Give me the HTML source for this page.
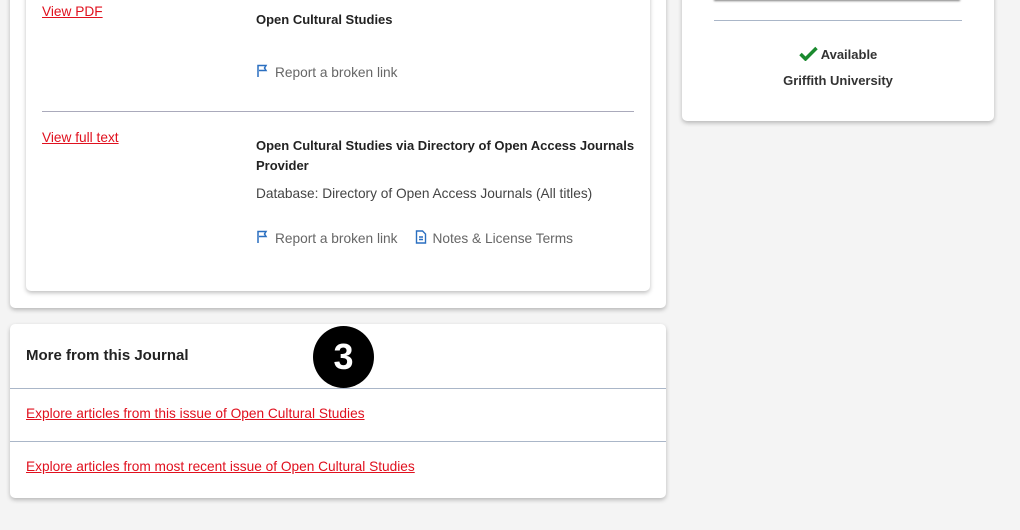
<!DOCTYPE html>
<html><head><meta charset="utf-8"><style>
body{margin:0;width:1020px;height:530px;background:#f4f4f4;font-family:"Liberation Sans",sans-serif;position:relative;overflow:hidden;color:#333}
.abs{position:absolute}
.card{background:#fff;border-radius:5px;box-shadow:0 2px 4px rgba(0,0,0,.25)}
a{color:#e0101e;text-decoration:underline;font-size:13.7px}
.b{font-weight:bold;font-size:13px;color:#222}
.g{font-size:13.7px;color:#666}
.t{font-size:13.7px;color:#444}
</style></head><body>
<div class="abs card" style="left:10px;top:-20px;width:656px;height:328px"></div>
<div class="abs card" style="left:26px;top:-20px;width:624px;height:311px"></div>
<a class="abs" style="left:42px;top:4px">View PDF</a>
<div class="abs b" style="left:256px;top:12px">Open Cultural Studies</div>
<div class="abs g" style="left:256px;top:64px"><svg width="14" height="14" viewBox="0 0 14 14" style="vertical-align:-1px;margin-right:5px"><path d="M2 13V1.5h8l-1.5 2.5 1.5 2.5H3" fill="none" stroke="#2a6fc0" stroke-width="1.5"/></svg>Report a broken link</div>
<div class="abs" style="left:42px;top:111px;width:592px;height:1px;background:#aab"></div>
<a class="abs" style="left:42px;top:130px">View full text</a>
<div class="abs b" style="left:256px;top:136px;width:380px;line-height:20px">Open Cultural Studies via Directory of Open Access Journals Provider</div>
<div class="abs t" style="left:256px;top:186px">Database: Directory of Open Access Journals (All titles)</div>
<div class="abs g" style="left:256px;top:230px"><svg width="14" height="14" viewBox="0 0 14 14" style="vertical-align:-1px;margin-right:5px"><path d="M2 13V1.5h8l-1.5 2.5 1.5 2.5H3" fill="none" stroke="#2a6fc0" stroke-width="1.5"/></svg>Report a broken link<svg width="14" height="14" viewBox="0 0 14 14" style="vertical-align:-1px;margin:0 5px 0 16px"><path d="M2.5 1h6l3 3v9h-9z M5 7h4M5 9.5h4" fill="none" stroke="#2a6fc0" stroke-width="1.4"/></svg>Notes &amp; License Terms</div>

<div class="abs card" style="left:682px;top:-20px;width:312px;height:141px"></div>
<div class="abs" style="left:714px;top:-10px;width:246px;height:10px;background:#fff;box-shadow:0 1px 2px rgba(0,0,0,.5)"></div>
<div class="abs" style="left:714px;top:20px;width:248px;height:1px;background:#aab6c8"></div>
<div class="abs b" style="left:682px;top:46px;width:312px;text-align:center;color:#333"><svg width="19" height="15" viewBox="0 0 19 15" style="vertical-align:-2px;margin-right:3px"><path d="M1.5 8l5 5 11-11" fill="none" stroke="#1a8a2e" stroke-width="3.5"/></svg>Available</div>
<div class="abs b" style="left:682px;top:73px;width:312px;text-align:center;color:#333">Griffith University</div>

<div class="abs card" style="left:10px;top:324px;width:656px;height:174px"></div>
<div class="abs" style="left:26px;top:347px;font-size:15px;font-weight:bold;color:#222">More from this Journal</div>
<div class="abs" style="left:10px;top:388px;width:656px;height:1px;background:#aab6c8"></div>
<div class="abs" style="left:10px;top:441px;width:656px;height:1px;background:#aab6c8"></div>
<a class="abs" style="left:26px;top:406px">Explore articles from this issue of Open Cultural Studies</a>
<a class="abs" style="left:26px;top:459px">Explore articles from most recent issue of Open Cultural Studies</a>
<div class="abs" style="left:313px;top:326px;width:61px;height:62px;border-radius:50%;background:#000;color:#fff;font-weight:bold;font-size:36px;line-height:62px;text-align:center">3</div>
</body></html>
